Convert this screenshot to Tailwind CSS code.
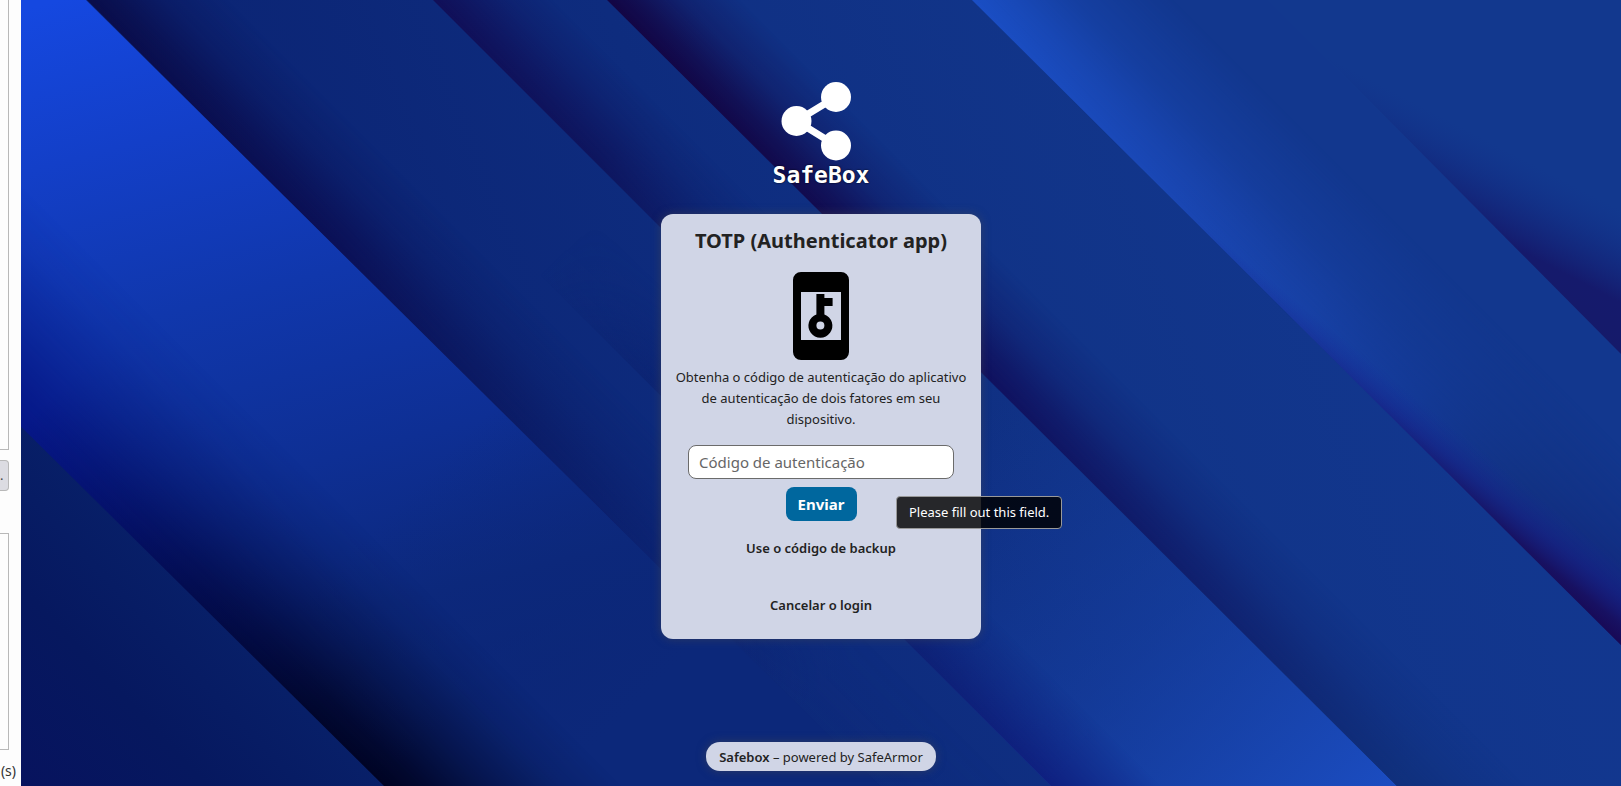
<!DOCTYPE html>
<html lang="pt-BR">
<head>
<meta charset="utf-8">
<title>SafeBox</title>
<meta name="viewport" content="width=device-width, initial-scale=1">
<script src="https://cdn.jsdelivr.net/npm/@tailwindcss/browser@4"></script>
</head>
<body class="flex min-h-screen overflow-hidden bg-[#fdfdfd] font-['Noto_Sans',sans-serif] text-[13px] leading-[21px] text-[#222222]">

  <!-- Edge of the neighbouring window -->
  <aside class="flex w-[21px] shrink-0 flex-col overflow-hidden bg-[#fdfdfd]">
    <div class="mr-3 h-[450px] border-r border-b border-[#b8b8b8]"></div>
    <button type="button" class="mt-[10px] mr-3 flex h-[31px] items-center justify-start rounded-r-sm border border-l-0 border-[#b8b8b8] bg-[#dcdce2] text-[#444444]">.</button>
    <div class="mt-[42px] mr-3 flex-1 border-y border-r border-[#b8b8b8]"></div>
    <p class="flex h-9 items-center justify-end pr-[5px] pt-[6px] text-sm text-[#333333]">(s)</p>
  </aside>

  <div class="relative isolate flex flex-1 flex-col items-center overflow-hidden bg-[#0f2e80]">

    <!-- Wallpaper: diagonal sheets with soft shadows -->
    <svg class="absolute inset-0 -z-10 h-full w-full" viewBox="21 0 1600 786" preserveAspectRatio="none" aria-hidden="true">
      <defs>
        <linearGradient id="base" gradientUnits="userSpaceOnUse" x1="300" y1="400" x2="1300" y2="0">
          <stop offset="0" stop-color="#0b2474"/><stop offset=".4" stop-color="#0e2c7e"/><stop offset=".75" stop-color="#113488"/><stop offset="1" stop-color="#12378f"/>
        </linearGradient>
        <linearGradient id="sheetA" gradientUnits="userSpaceOnUse" x1="21" y1="786" x2="220" y2="600">
          <stop offset="0" stop-color="#07135e"/><stop offset=".5" stop-color="#06185f"/><stop offset="1" stop-color="#082069"/>
        </linearGradient>
        <linearGradient id="sheetB" gradientUnits="userSpaceOnUse" x1="60" y1="0" x2="260" y2="760">
          <stop offset="0" stop-color="#1548e0"/><stop offset=".2" stop-color="#133fc8"/><stop offset=".42" stop-color="#1037ac"/><stop offset=".65" stop-color="#0e2f94"/><stop offset=".85" stop-color="#0c287c"/><stop offset="1" stop-color="#0b2474"/>
        </linearGradient>
        <linearGradient id="fadeB" gradientUnits="userSpaceOnUse" x1="500" y1="400" x2="720" y2="620">
          <stop offset="0" stop-color="#0c287a" stop-opacity="0"/><stop offset="1" stop-color="#0c287a"/>
        </linearGradient>
        <linearGradient id="shadeB" gradientUnits="userSpaceOnUse" x1="21" y1="427" x2="384" y2="786">
          <stop offset="0" stop-color="#061788"/><stop offset=".45" stop-color="#030c50"/><stop offset=".8" stop-color="#01062c"/><stop offset="1" stop-color="#000322"/>
        </linearGradient>
        <linearGradient id="alphaB" gradientUnits="userSpaceOnUse" x1="-404" y1="0" x2="-284" y2="-120">
          <stop offset="0" stop-color="#fff"/><stop offset=".15" stop-color="#ddd"/><stop offset=".45" stop-color="#777"/><stop offset=".75" stop-color="#222"/><stop offset="1" stop-color="#000"/>
        </linearGradient>
        <mask id="maskB" maskUnits="userSpaceOnUse" x="0" y="0" width="1621" height="786"><rect width="1621" height="786" fill="url(#alphaB)"/></mask>

        <linearGradient id="shadeC" gradientUnits="userSpaceOnUse" x1="86" y1="0" x2="800" y2="710">
          <stop offset="0" stop-color="#0a0d4a"/><stop offset=".35" stop-color="#0b1056"/><stop offset=".55" stop-color="#0b1860" stop-opacity=".9"/><stop offset=".8" stop-color="#0b1f6c" stop-opacity=".6"/><stop offset="1" stop-color="#0b226e" stop-opacity=".1"/>
        </linearGradient>
        <linearGradient id="alphaC" gradientUnits="userSpaceOnUse" x1="88" y1="0" x2="158" y2="-70">
          <stop offset="0" stop-color="#fff"/><stop offset=".2" stop-color="#ccc"/><stop offset=".55" stop-color="#555"/><stop offset="1" stop-color="#000"/>
        </linearGradient>
        <mask id="maskC" maskUnits="userSpaceOnUse" x="0" y="0" width="1621" height="786"><rect width="1621" height="786" fill="url(#alphaC)"/></mask>

        <linearGradient id="shadeM" gradientUnits="userSpaceOnUse" x1="540" y1="275" x2="1051" y2="786">
          <stop offset="0" stop-color="#0b1f6c" stop-opacity="0"/><stop offset=".25" stop-color="#0b1f6c" stop-opacity=".6"/><stop offset=".7" stop-color="#0d1d70" stop-opacity=".8"/><stop offset="1" stop-color="#0f2080"/>
        </linearGradient>
        <linearGradient id="alphaM" gradientUnits="userSpaceOnUse" x1="265" y1="0" x2="320" y2="-55">
          <stop offset="0" stop-color="#fff"/><stop offset=".5" stop-color="#777"/><stop offset="1" stop-color="#000"/>
        </linearGradient>
        <mask id="maskM" maskUnits="userSpaceOnUse" x="0" y="0" width="1621" height="786"><rect width="1621" height="786" fill="url(#alphaM)"/></mask>

        <linearGradient id="shadeD" gradientUnits="userSpaceOnUse" x1="433" y1="0" x2="900" y2="467">
          <stop offset="0" stop-color="#110f58"/><stop offset=".35" stop-color="#0e155e"/><stop offset=".6" stop-color="#0d1b66" stop-opacity=".7"/><stop offset="1" stop-color="#0d2070" stop-opacity="0"/>
        </linearGradient>
        <linearGradient id="alphaD" gradientUnits="userSpaceOnUse" x1="433" y1="0" x2="493" y2="-60">
          <stop offset="0" stop-color="#fff"/><stop offset=".2" stop-color="#ccc"/><stop offset=".6" stop-color="#555"/><stop offset="1" stop-color="#000"/>
        </linearGradient>
        <mask id="maskD" maskUnits="userSpaceOnUse" x="0" y="0" width="1621" height="786"><rect width="1621" height="786" fill="url(#alphaD)"/></mask>
        <linearGradient id="glowD" gradientUnits="userSpaceOnUse" x1="960" y1="440" x2="1340" y2="830">
          <stop offset="0" stop-color="#1642a8" stop-opacity="0"/><stop offset=".5" stop-color="#1845b0" stop-opacity=".45"/><stop offset="1" stop-color="#1b4cc0"/>
        </linearGradient>

        <linearGradient id="shadeE" gradientUnits="userSpaceOnUse" x1="607" y1="0" x2="1397" y2="786">
          <stop offset="0" stop-color="#130645"/><stop offset=".2" stop-color="#120a4c"/><stop offset=".5" stop-color="#101260"/><stop offset=".75" stop-color="#10206e"/><stop offset="1" stop-color="#10307c"/>
        </linearGradient>
        <linearGradient id="alphaE" gradientUnits="userSpaceOnUse" x1="610" y1="0" x2="675" y2="-65">
          <stop offset="0" stop-color="#fff"/><stop offset=".2" stop-color="#ccc"/><stop offset=".55" stop-color="#555"/><stop offset="1" stop-color="#000"/>
        </linearGradient>
        <mask id="maskE" maskUnits="userSpaceOnUse" x="0" y="0" width="1621" height="786"><rect width="1621" height="786" fill="url(#alphaE)"/></mask>

        <linearGradient id="glowF" gradientUnits="userSpaceOnUse" x1="972" y1="0" x2="1621" y2="645">
          <stop offset="0" stop-color="#1a4ec4"/><stop offset=".3" stop-color="#1a47b4"/><stop offset=".5" stop-color="#1842a8"/><stop offset=".65" stop-color="#143a98"/><stop offset=".8" stop-color="#12307e"/><stop offset="1" stop-color="#121c70"/>
        </linearGradient>
        <linearGradient id="alphaF" gradientUnits="userSpaceOnUse" x1="974" y1="0" x2="1074" y2="-100">
          <stop offset="0" stop-color="#fff"/><stop offset=".2" stop-color="#ccc"/><stop offset=".5" stop-color="#666"/><stop offset="1" stop-color="#000"/>
        </linearGradient>
        <mask id="maskF" maskUnits="userSpaceOnUse" x="0" y="0" width="1621" height="786"><rect width="1621" height="786" fill="url(#alphaF)"/></mask>
        <!-- Shadow that widens like a fan from its starting point on the sheet's edge -->
        <linearGradient id="fanF" gradientUnits="userSpaceOnUse" x1="1180" y1="207" x2="1139" y2="258">
          <stop offset="0" stop-color="#16289a" stop-opacity="0"/><stop offset=".4" stop-color="#171c84" stop-opacity=".5"/><stop offset=".75" stop-color="#180f60" stop-opacity=".9"/><stop offset="1" stop-color="#180854"/>
        </linearGradient>
        <linearGradient id="fanG" gradientUnits="userSpaceOnUse" x1="1325" y1="55" x2="1266" y2="168">
          <stop offset="0" stop-color="#12308a" stop-opacity="0"/><stop offset=".35" stop-color="#13257a" stop-opacity=".6"/><stop offset=".65" stop-color="#151a6c"/><stop offset="1" stop-color="#151a6a"/>
        </linearGradient>
      </defs>

      <rect width="1621" height="786" fill="url(#base)"/>
      <path d="M87 0H433L1219 786H877Z" fill="url(#shadeC)" mask="url(#maskC)"/>
      <path d="M433 0H607L1397 786H1219Z" fill="url(#shadeD)" mask="url(#maskD)"/>
      <path d="M265 0H607L1397 786H1051Z" fill="url(#glowD)"/>
      <path d="M265 0H607L1397 786H1051Z" fill="url(#shadeM)" mask="url(#maskM)"/>
      <path d="M607 0H1621V786H1397Z" fill="#12368c"/>
      <path d="M607 0H972L1621 645V786H1397Z" fill="url(#base)" opacity=".7"/>
      <path d="M607 0H972L1621 645V786H1397Z" fill="url(#shadeE)" mask="url(#maskE)"/>
      <path d="M972 0H1621V645Z" fill="#12378e"/>
      <path d="M972 0H1621V645Z" fill="url(#glowF)" mask="url(#maskF)"/>
      <path d="M1180 207L1621 562V645Z" fill="url(#fanF)"/>
      <path d="M1267 0H1621V354Z" fill="#12388e"/>
      <path d="M1325 56L1621 210V354Z" fill="url(#fanG)"/>
      <path d="M0 0H86L880 786H0Z" fill="url(#sheetB)"/>
      <path d="M0 0H86L880 786H0Z" fill="url(#fadeB)"/>
      <path d="M0 0H86L880 786H0Z" fill="url(#shadeB)" mask="url(#maskB)"/>
      <path d="M0 406L384 786H0Z" fill="url(#sheetA)"/>
    </svg>

    <header class="flex flex-col items-center pt-[82px]">
      <svg class="h-[79px] w-20" viewBox="-10 0 80 79" fill="#fff" aria-hidden="true">
        <path d="M45 15 5.500 39 45 63.500" fill="none" stroke="#fff" stroke-width="7"/>
        <circle cx="45" cy="15" r="15"/><circle cx="5.500" cy="39" r="15"/><circle cx="45" cy="63.500" r="15"/>
      </svg>
      <h1 class="font-['DejaVu_Sans_Mono',monospace] text-[23px] leading-7 font-bold text-white [text-shadow:0_0_2px_#000]">SafeBox</h1>
    </header>

    <main class="relative mt-[25px] flex w-80 flex-col items-center rounded-xl bg-[#d0d5e6] px-[10px] shadow-[0_0_10px_rgba(77,77,77,0.5)]">
      <h2 class="pt-3 text-xl leading-[30px] font-bold">TOTP (Authenticator app)</h2>
      <svg class="mt-3 size-24" viewBox="0 0 24 24" fill="#000" aria-hidden="true">
        <path fill-rule="evenodd" d="M7 1H17A2 2 0 0 1 19 3V21A2 2 0 0 1 17 23H7A2 2 0 0 1 5 21V3A2 2 0 0 1 7 1ZM7 6V18H17V6Z"/>
        <path fill-rule="evenodd" d="M10.850 6.500H12.850V7.500H14.900V9.500H12.850V11.600A3 3 0 1 1 10.850 11.600ZM11.850 13.400A1 1 0 1 0 11.850 15.400 1 1 0 1 0 11.850 13.400Z"/>
      </svg>
      <p class="mt-[3px] text-center">Obtenha o código de autenticação do aplicativo de autenticação de dois fatores em seu dispositivo.</p>
      <form class="mt-[15px] flex w-[266px] flex-col items-center gap-2">
        <input type="text" required aria-label="Código de autenticação" placeholder="Código de autenticação" class="h-[34px] w-full rounded-lg border border-[#6b6b6b] bg-white px-[10px] text-[15px] placeholder:text-[#666666]">
        <button type="submit" class="h-[34px] w-[71px] rounded-lg bg-[#00679e] text-[15px] font-bold text-white">Enviar</button>
      </form>
      <a href="#" class="mt-[17px] font-semibold">Use o código de backup</a>
      <a href="#" class="mt-9 mb-[23px] font-semibold">Cancelar o login</a>
      <div role="tooltip" class="absolute top-[282px] left-[235px] rounded border border-[#999999] bg-black/82 px-3 py-[5px] whitespace-nowrap text-white">Please fill out this field.</div>
    </main>

    <footer class="mt-auto mb-[15px] rounded-[14px] bg-[#d0d5e6] px-[13px] pt-[5px] pb-[3px] shadow-[0_0_10px_rgba(77,77,77,0.5)]"><a href="#" class="font-semibold">Safebox</a> – powered by SafeArmor</footer>
  </div>
</body>
</html>
